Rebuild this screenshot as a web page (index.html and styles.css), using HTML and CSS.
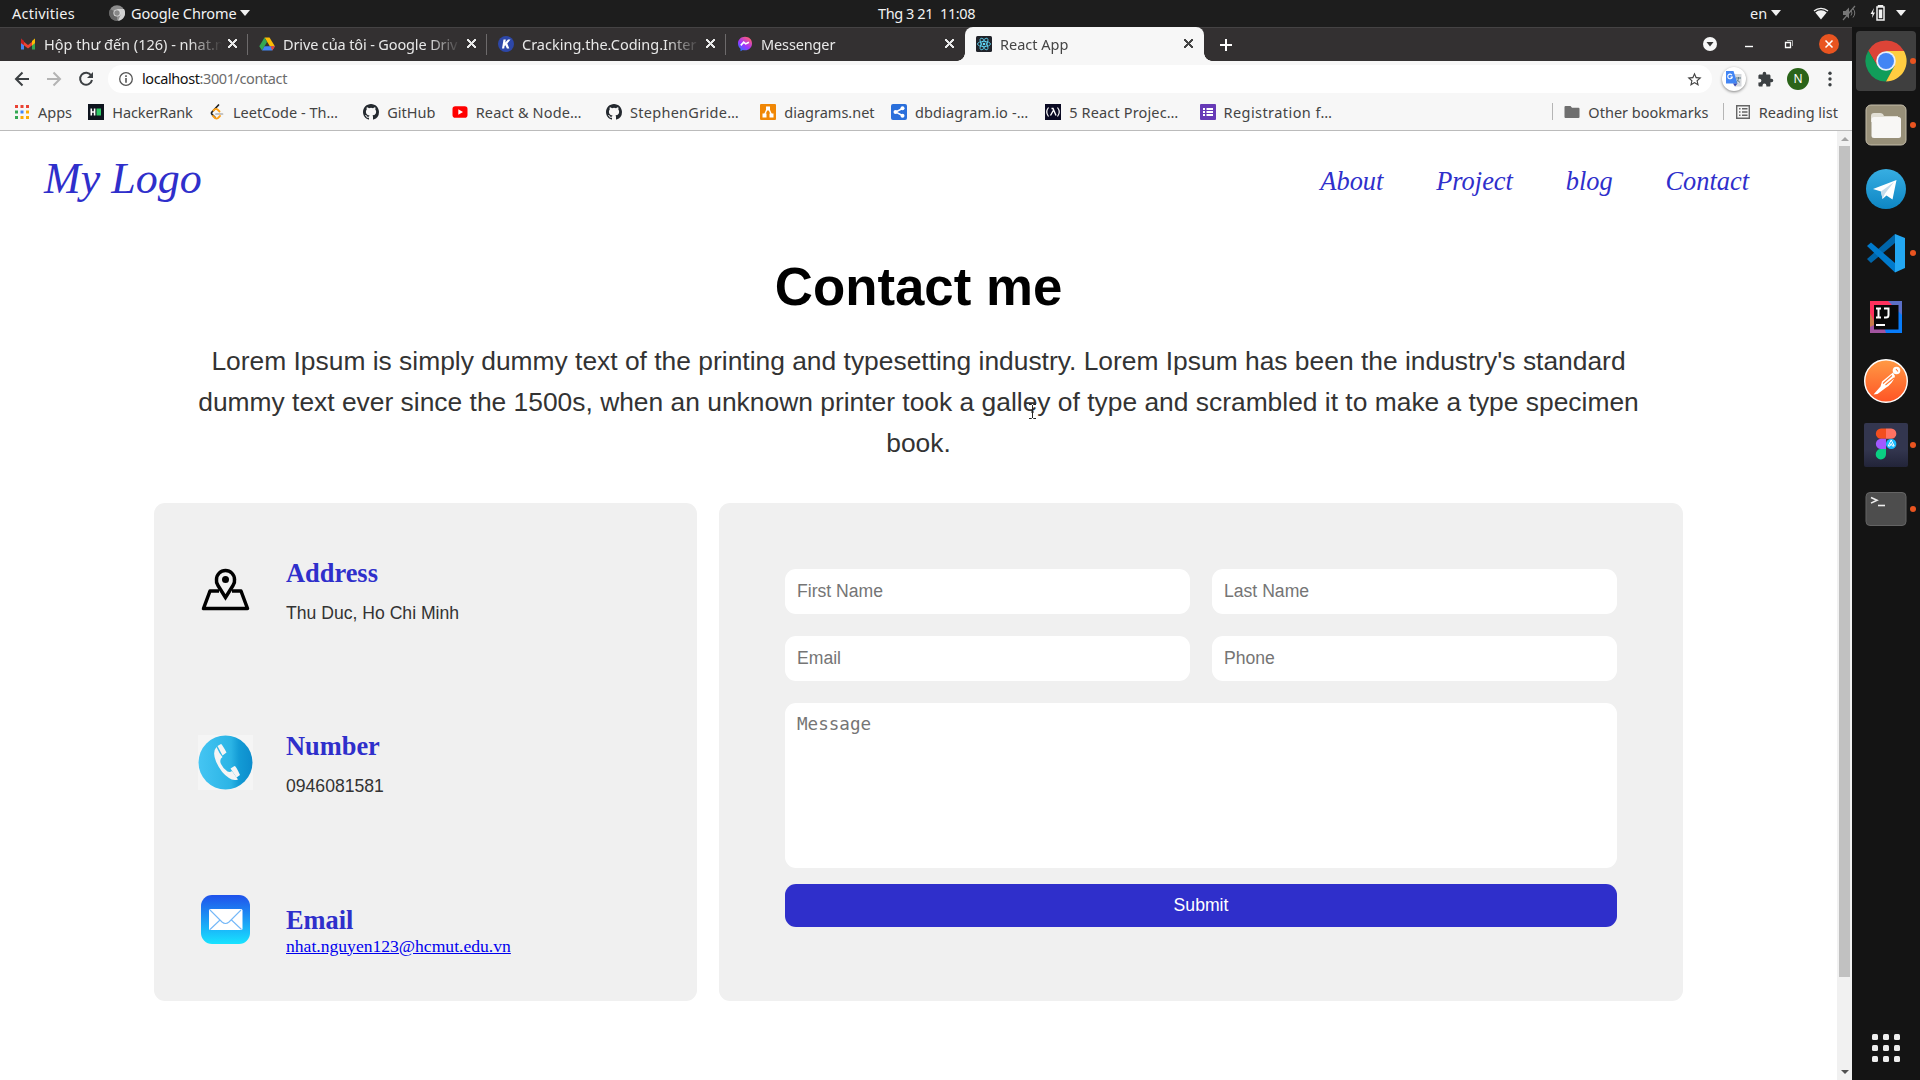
FILE: index.html
```html
<!DOCTYPE html>
<html lang="vi">
<head>
<meta charset="utf-8">
<title>React App</title>
<link rel="stylesheet" href="styles.css">
</head>
<body>
<header class="topbar">
  <span class="fit activities">Activities</span>
  <svg class="app-ico" viewBox="0 0 16 16"><circle cx="8" cy="8" r="7.8" fill="#8d8d8d"/><path d="M8 4h7A7.8 7.8 0 0 1 9 15.8L11.5 10z" fill="#d0d0d0"/><path d="M1.3 4A7.8 7.8 0 0 0 8 15.8L8 8z" fill="#666"/><circle cx="8" cy="8" r="3.6" fill="#ddd"/><circle cx="8" cy="8" r="2.7" fill="#888"/></svg>
  <span class="fit appname">Google Chrome</span>
  <i class="caret"></i>
  <span class="fit clock">Thg 3 21&ensp;11:08</span>
  <span class="fit lang">en</span>
  <i class="caret caret-lang"></i>
  <svg class="wifi" viewBox="0 0 16 14"><path d="M1 5a10.500 10.500 0 0 1 14 0" fill="none" stroke="#f2f2f2" stroke-width="1.300"/><path d="M2.300 6.500a8.500 8.500 0 0 1 11.400 0L8 13.500z" fill="#f2f2f2"/></svg>
  <svg class="mute" viewBox="0 0 16 16"><path d="M2 6h2.500L8 2.500v11L4.500 10H2z" fill="#777"/><path d="M10 5.500q2 2.500 0 5M12 3.500q3.500 4.500 0 9" fill="none" stroke="#777"/><path d="M14 1L2 15" stroke="#777" stroke-width="1.200"/></svg>
  <svg class="battery" viewBox="0 0 16 16"><path d="M8.500 2h5.500v13H7V2h1.500V.8h4V2" fill="none" stroke="#f2f2f2" stroke-width="1.500"/><path d="M8.800 4.500h3.500v8.700H8.800z" fill="#f2f2f2"/><path d="M4 3L.5 9h2L2 13 5 7.500H3z" fill="#f2f2f2"/></svg>
  <i class="caret caret-sys"></i>
</header>
<div class="desktop">
<section class="browser">
  <div class="tabs">
    <div class="tab"><svg class="fav" viewBox="0 0 16 16"><path d="M1 2.500v11h3V7z" fill="#4285f4"/><path d="M15 2.500v11h-3V7z" fill="#34a853"/><path d="M1 3.500L8 9l7-5.500V7l-7 5.500L1 7z" fill="#ea4335"/><path d="M12 5l3-2.500V7l-3 2.500z" fill="#fbbc04"/><path d="M1 2.500L4 5v4L1 7z" fill="#c5221f"/></svg><span class="tt"><span class="fit">Hộp thư đến (126) - nhat.n</span></span><b class="x"></b></div>
    <div class="tab"><svg class="fav" viewBox="0 0 16 16"><path d="M5.500 1.500h5L16 10.500h-5z" fill="#fbbc04"/><path d="M5.500 1.500L8 6 3 14.500.3 10.300z" fill="#34a853"/><path d="M5.500 10.300H16l-2.700 4.200H3z" fill="#4285f4"/><path d="M16 10.300h-4.500l1.800 4.200z" fill="#ea4335"/></svg><span class="tt"><span class="fit tight">Drive của tôi - Google Driv</span></span><b class="x"></b></div>
    <div class="tab"><svg class="fav" viewBox="0 0 16 16"><circle cx="8" cy="8" r="8" fill="#2d47a8"/><path d="M5.500 3.500h2.300l-.5 3L10 3.500h2.500L9.300 7.600l2 5H8.900L7.400 9.200l-.8.800-.4 2.600H4z" fill="#fff"/></svg><span class="tt"><span class="fit">Cracking.the.Coding.Inter</span></span><b class="x"></b></div>
    <div class="tab nosep"><svg class="fav" viewBox="0 0 16 16"><defs><linearGradient id="msg" x1="0" y1="1" x2=".7" y2="0"><stop offset="0" stop-color="#0a84ff"/><stop offset=".5" stop-color="#a033ff"/><stop offset="1" stop-color="#ff5c77"/></linearGradient></defs><path d="M8 .8C3.900.8 1 3.700 1 7.500c0 2.200 1 4 2.500 5.200v2.600l2.300-1.300c.7.200 1.400.3 2.200.3 4.100 0 7-2.900 7-6.800S12.100.8 8 .8z" fill="url(#msg)"/><path d="M3.800 9.400l2.900-3.200 2 1.700 3.200-1.700" fill="none" stroke="#fff" stroke-width="1.600"/></svg><span class="tt"><span class="fit tight">Messenger</span></span><b class="x"></b></div>
    <div class="tab active"><svg class="fav" viewBox="0 0 16 16"><rect width="16" height="16" rx="1.500" fill="#20232a"/><g fill="none" stroke="#61dafb" stroke-width=".8"><ellipse cx="8" cy="8" rx="6.500" ry="2.600"/><ellipse cx="8" cy="8" rx="6.500" ry="2.600" transform="rotate(60 8 8)"/><ellipse cx="8" cy="8" rx="6.500" ry="2.600" transform="rotate(120 8 8)"/></g><circle cx="8" cy="8" r="1.300" fill="#61dafb"/></svg><span class="tt"><span class="fit">React App</span></span><b class="x"></b></div>
    <svg class="plus" viewBox="0 0 14 14"><path d="M7 1v12M1 7h12" stroke="#fff" stroke-width="2"/></svg>
    <svg class="winctl" viewBox="0 0 140 34"><circle cx="10" cy="17" r="7" fill="#f7f7f7"/><path d="M6.500 15h7L10 19.500z" fill="#333"/><path d="M45 19.500h8" stroke="#fff" stroke-width="1.400"/><path d="M85.500 15.500h5v5h-5z" fill="none" stroke="#fff" stroke-width="1.300"/><path d="M87 13.500h5.500V19" fill="none" stroke="#aaa"/><circle cx="129" cy="17" r="10" fill="#e95420"/><path d="M125.500 13.500l7 7m0-7l-7 7" stroke="#fff" stroke-width="1.500"/></svg>
  </div>
  <div class="toolbar">
    <svg class="navs" viewBox="0 0 100 36"><g fill="none" stroke-width="2"><path d="M29 18H16m6.500-6.500L16 18l6.500 6.500" stroke="#3c4043"/><path d="M47 18h13m-6.500-6.500L60 18l-6.500 6.500" stroke="#b4b4b4"/><path d="M91.200 14.500A6 6 0 1 0 92 19" stroke="#3c4043"/></g><path d="M93 11v6h-6z" fill="#3c4043"/></svg>
    <div class="omni">
      <svg class="info" viewBox="0 0 16 16"><circle cx="8" cy="8" r="6.300" fill="none" stroke="#555" stroke-width="1.300"/><path d="M8 4.200v1.700M8 7v4.800" stroke="#555" stroke-width="1.600"/></svg>
      <span class="fit url">localhost<em>:3001/contact</em></span>
      <svg class="star" viewBox="0 0 24 24"><path d="M22 9.240l-7.190-.62L12 2 9.190 8.630 2 9.240l5.460 4.730L5.820 21 12 17.270 18.180 21l-1.630-7.030L22 9.240zM12 15.400l-3.760 2.270 1-4.280-3.320-2.880 4.380-.38L12 6.100l1.710 4.040 4.380.38-3.320 2.880 1 4.280L12 15.400z" fill="#444"/></svg>
    </div>
    <div class="translate"><svg viewBox="0 0 18 18"><path d="M8 4h8.500v12.500H10z" fill="#d5d8dc"/><path d="M1 1h7.500l4 12.500H1z" fill="#4285f4"/><path d="M8 13.500h4.500L10 16.500z" fill="#3a49b0"/><path d="M7 5.200A2.300 2.300 0 1 0 7.300 7H5.400" fill="none" stroke="#fff" stroke-width="1.100"/><path d="M11 8h5M13.500 7v1c0 2-1 3.300-2 4M12 9.500c.5 1.200 1.800 2.200 3 2.800" fill="none" stroke="#5f7c8a"/></svg></div>
    <svg class="puzzle" viewBox="0 0 24 24"><path d="M20.500 11H19V7c0-1.100-.9-2-2-2h-4V3.500a2.500 2.500 0 0 0-5 0V5H4c-1.100 0-2 .9-2 2v3.800h1.500a2.700 2.700 0 0 1 0 5.400H2V20c0 1.100.9 2 2 2h3.800v-1.500a2.700 2.700 0 0 1 5.400 0V22H17c1.100 0 2-.9 2-2v-4h1.500a2.500 2.500 0 0 0 0-5z" fill="#3c4043"/></svg>
    <span class="avatar">N</span>
    <svg class="dots" viewBox="0 0 4 16"><g fill="#3c4043"><circle cx="2" cy="2.300" r="1.700"/><circle cx="2" cy="8" r="1.700"/><circle cx="2" cy="13.700" r="1.700"/></g></svg>
  </div>
  <div class="bookmarks">
    <div class="bm apps"><svg viewBox="0 0 16 16"><path d="M1 1h3v3H1zM6.500 1h3v3h-3zM12 1h3v3h-3z" fill="#ea4335"/><path d="M1 6.500h3v3H1z" fill="#34a853"/><path d="M6.500 6.500h3v3h-3z" fill="#4285f4"/><path d="M12 6.500h3v3h-3zM6.500 12h3v3h-3zM12 12h3v3h-3z" fill="#fbab04"/><path d="M1 12h3v3H1z" fill="#34a853"/></svg><span class="fit">Apps</span></div>
    <div class="bm"><svg viewBox="0 0 16 16"><path d="M0 0h16v16H0z" fill="#0e141e"/><path d="M2.500 4.500h1.600v2.700h1.700V4.500h1.600v7H5.800V8.800H4.100v2.700H2.500z" fill="#fff"/><path d="M8.500 4.500H13v7H8.500z" fill="#2ec866"/></svg><span class="fit tight">HackerRank</span></div>
    <div class="bm wide"><svg viewBox="0 0 16 16"><path d="M9.500 1L3 8q-1 1.200 0 2.300l3 3" fill="none" stroke="#222" stroke-width="1.700" stroke-linecap="round"/><path d="M4.500 6.500l1-1q1.500-1.200 3 0l2 2M4 12l2 2q1.500 1.200 3 0l2-2" fill="none" stroke="#ffa116" stroke-width="1.800" stroke-linecap="round"/><path d="M7 10h6.500" stroke="#b3b3b3" stroke-width="1.700" stroke-linecap="round"/></svg><span><span class="fit">LeetCode - Th…</span></span></div>
    <div class="bm"><svg viewBox="0 0 16 16"><path id="gh" d="M8 0C3.580 0 0 3.580 0 8c0 3.540 2.290 6.530 5.470 7.590.4.070.55-.17.55-.38 0-.19-.01-.82-.01-1.490-2.010.37-2.530-.49-2.690-.94-.09-.23-.48-.94-.82-1.130-.28-.15-.68-.52-.01-.53.63-.01 1.080.58 1.230.82.72 1.210 1.870.87 2.330.66.070-.52.28-.87.51-1.070-1.780-.2-3.640-.89-3.640-3.950 0-.87.31-1.590.82-2.150-.08-.2-.36-1.020.080-2.120 0 0 .67-.21 2.200.82a7.600 7.600 0 0 1 4 0c1.530-1.040 2.200-.82 2.200-.82.44 1.100.16 1.920.08 2.120.51.56.82 1.270.82 2.150 0 3.070-1.870 3.750-3.650 3.950.29.25.54.73.54 1.480 0 1.070-.01 1.930-.01 2.200 0 .21.15.46.55.38A8 8 0 0 0 16 8c0-4.420-3.580-8-8-8z" fill="#24292f"/></svg><span class="fit">GitHub</span></div>
    <div class="bm wide"><svg viewBox="0 0 16 16"><rect x=".5" y="2.300" width="15" height="11.400" rx="2.800" fill="#f00"/><path d="M6.300 5.300v5.400L11 8z" fill="#fff"/></svg><span><span class="fit loose1">React &amp; Node…</span></span></div>
    <div class="bm wide"><svg viewBox="0 0 16 16"><use href="#gh"/></svg><span><span class="fit loose2">StephenGride…</span></span></div>
    <div class="bm"><svg viewBox="0 0 16 16"><rect width="16" height="16" rx="1" fill="#f08705"/><path d="M8 3L4 12M8 3l4 9" stroke="#fff" stroke-width="1.400"/><path d="M6 2.500h4v4H6zM2.500 9.500h4v4h-4zM9.500 9.500h4v4h-4z" fill="#fff"/></svg><span class="fit">diagrams.net</span></div>
    <div class="bm wide"><svg viewBox="0 0 16 16"><rect width="16" height="16" rx="2" fill="#2a6fdb"/><path d="M11.500 4.500L4.500 8l7 3.500" fill="none" stroke="#fff" stroke-width="1.400"/><circle cx="4.500" cy="8" r="2" fill="#fff"/><circle cx="11.500" cy="4.300" r="2" fill="#fff"/><circle cx="11.500" cy="11.700" r="2" fill="#fff"/></svg><span><span class="fit loose1">dbdiagram.io -…</span></span></div>
    <div class="bm wide"><svg viewBox="0 0 16 16"><path d="M0 0h16v16H0z" fill="#0a0a23"/><path d="M3.500 3.500Q0 8 3.500 12.500M12.500 3.500Q16 8 12.500 12.500" fill="none" stroke="#fff" stroke-width="1.200"/><path d="M6.500 4.500h1.500L11 11.500M8.300 6.500L5.500 11.500" fill="none" stroke="#fff" stroke-width="1.400"/></svg><span><span class="fit loose1">5 React Projec…</span></span></div>
    <div class="bm wide"><svg viewBox="0 0 16 16"><rect width="16" height="16" rx="1" fill="#673ab7"/><path d="M3 4h2v2H3zM3 7h2v2H3zM3 10h2v2H3zM6.500 4H13v2H6.500zM6.500 7H13v2H6.500zM6.500 10H13v2H6.500z" fill="#fff"/></svg><span><span class="fit loose3">Registration f…</span></span></div>
    <div class="bm other"><svg viewBox="0 0 16 16"><path d="M1.500 2h5L8 3.700h6.500q1 0 1 1V13q0 1-1 1h-13q-1 0-1-1V3q0-1 1-1z" fill="#6f6f6f"/></svg><span class="fit">Other bookmarks</span></div>
    <div class="bm reading"><svg viewBox="0 0 16 16"><path d="M1.700 1.700h12.600v12.600H1.700z" fill="none" stroke="#666" stroke-width="1.400"/><path d="M4 4.700h1.500M7 4.700h5.500M4 8h1.500M7 8h5.500M4 11.300h1.500M7 11.300h5.500" stroke="#666" stroke-width="1.500"/></svg><span class="fit">Reading list</span></div>
  </div>
  <div class="viewport">
    <main class="page">
      <nav class="site-nav">
        <span class="fit logo">My Logo</span>
        <div class="links"><a>About</a><a>Project</a><a>blog</a><a>Contact</a></div>
      </nav>
      <h1>Contact me</h1>
      <p class="lead">Lorem Ipsum is simply dummy text of the printing and typesetting industry. Lorem Ipsum has been the industry's standard dummy text ever since the 1500s, when an unknown printer took a galley of type and scrambled it to make a type specimen book.</p>
      <div class="cards">
        <section class="card info-card">
          <div class="row"><svg viewBox="0 0 55 55"><g fill="none" stroke="#000" stroke-width="3.500" stroke-linejoin="round"><path d="M21 29h-9L5.500 46.500h44L43 29h-9"/><path d="M27.500 35.500L20 23.500q-2-3-1.500-6a9 9 0 0 1 18 0q.5 3-1.500 6z" stroke-linejoin="miter"/></g><circle cx="27.500" cy="17.500" r="3.500"/></svg><div><h2>Address</h2><p>Thu Duc, Ho Chi Minh</p></div></div>
          <div class="row"><svg viewBox="0 0 55 55"><defs><linearGradient id="ph"><stop offset="0" stop-color="#45c5f3"/><stop offset=".6" stop-color="#2bb4e5"/><stop offset=".75" stop-color="#139bd5"/><stop offset="1" stop-color="#0c8ccc"/></linearGradient></defs><path d="M0 0h55v55H0z" fill="#f5f5f5"/><circle cx="27.500" cy="27.500" r="27" fill="url(#ph)"/><path d="M18.500 12q2.500 6 6 10-3.500 2.500-1.500 7t6.500 7.500q2.500 1 4.500-.5l6 8.500q-5 1.500-9-1.500-8-5-13-16.500-4-9.500.5-14.500z" fill="#f5f5f5"/><path d="M19.500 11l3.500-2q1 0 5.500 8.500L24.500 20.500zM32.500 33.500l4-2.500q1.500 0 5.500 9l-3.500 2.500z" fill="#f5f5f5"/></svg><div><h2>Number</h2><p>0946081581</p></div></div>
          <div class="row mail"><svg viewBox="0 0 55 55"><defs><linearGradient id="ml" x1="0" y1="0" x2="0" y2="1"><stop offset="0" stop-color="#1f51eb"/><stop offset="1" stop-color="#18e3ff"/></linearGradient></defs><rect x="3" y="3" width="49" height="49" rx="11" fill="url(#ml)"/><rect x="11" y="17" width="33.500" height="21" rx="1.500" fill="#fff"/><path d="M12 18l12 12q3.500 3 7 0l12-12M12 37.500l10-9.500M43.500 37.500l-10-9.500" fill="none" stroke="#74b8f8" stroke-width="1.100"/></svg><div><h2>Email</h2><a>nhat.nguyen123@hcmut.edu.vn</a></div></div>
        </section>
        <form class="card form-card">
          <input placeholder="First Name"><input placeholder="Last Name">
          <input placeholder="Email"><input placeholder="Phone">
          <textarea placeholder="Message"></textarea>
          <button type="button">Submit</button>
        </form>
      </div>
      <svg class="cursor" viewBox="0 0 9 17"><path d="M1 1.500h2.500l1 1 1-1H8M1 15.500h2.500l1-1 1 1H8M4.500 2v13M3 9h3" fill="none" stroke="#222"/></svg>
    </main>
    <div class="scroll"><i class="up"></i><i class="thumb"></i><i class="down"></i></div>
  </div>
</section>
<aside class="dock">
  <div class="app sel run"><svg viewBox="0 0 44 44"><path d="M22 12h18A20.500 20.500 0 0 0 4.300 11.700L13.500 27z" fill="#dd4437"/><path d="M4.300 11.700A20.500 20.500 0 0 0 22 42.500L30.500 27 13.500 27z" fill="#119d5a"/><path d="M22 12h18A20.500 20.500 0 0 1 22 42.500L30.500 27z" fill="#ffcd41"/><circle cx="22" cy="22" r="9.800" fill="#e8eefb"/><circle cx="22" cy="22" r="8" fill="#4285f4"/></svg></div>
  <div class="app run"><svg viewBox="0 0 44 44"><rect x="2" y="2" width="40" height="40" rx="5" fill="#989079" stroke="#c3bca9"/><path d="M7 13q0-3 3-3h6q3 0 4 3h14v6H7z" fill="#e2dfd5"/><rect x="7.500" y="14" width="29.500" height="21" rx="2.500" fill="#f8f7f5"/></svg></div>
  <div class="app"><svg viewBox="0 0 44 44"><defs><linearGradient id="tg" x1="0" y1="0" x2="0" y2="1"><stop offset="0" stop-color="#37aee2"/><stop offset="1" stop-color="#0e86c4"/></linearGradient></defs><circle cx="22" cy="22" r="20" fill="url(#tg)"/><path d="M9 22l23.500-9-4 19.500-6-4-4 3.500-1.500-7.500z" fill="#fff"/><path d="M17 24.500L30 15l-9 11.500-2.500 5.500z" fill="#c5dceb"/></svg></div>
  <div class="app run"><svg viewBox="0 0 44 44"><path d="M3 28l4 4L31 12V3z" fill="#0065a9"/><path d="M3 15l4-3.500L31 32v9.500z" fill="#007acc"/><path d="M31 3l10 4v30l-10 4.500z" fill="#23a7f2"/></svg></div>
  <div class="app"><svg viewBox="0 0 44 44"><path d="M6 6h32v32H6z" fill="#087cfa"/><path d="M6 6h26L6 38z" fill="#fe315d"/><path d="M6 18l10 20H6z" fill="#c77a4a"/><path d="M24 6h14v14z" fill="#5b6fc7"/><path d="M6 32l12-6 4 12H6z" fill="#a254a0"/><path d="M10 10h24.500v24.500H10z" fill="#080808"/><path d="M12 13.500h5M14.500 13.500v9M12 22.500h5M20 13.500h4.500v6.500q0 2.500-2.500 2.500h-2" fill="none" stroke="#fff" stroke-width="2"/><path d="M12 30h9" stroke="#fff" stroke-width="2"/></svg></div>
  <div class="app"><svg viewBox="0 0 44 44"><defs><linearGradient id="pm" x1="0" y1="0" x2="0" y2="1"><stop offset="0" stop-color="#ff9a45"/><stop offset="1" stop-color="#ff5425"/></linearGradient></defs><circle cx="22" cy="22" r="21.300" fill="url(#pm)" stroke="#fff" stroke-width="1.400"/><circle cx="32.500" cy="11.500" r="3.800" fill="#fff"/><path d="M29 13.500l-11 9-1.500 5-7 8 4-.5 8-6q7-4 9.500-12z" fill="#fff"/><path d="M28 16.500l-9 8M30 19l-8.500 7M32 10l2 2.500" stroke="#ff7a35" stroke-width="1.100"/></svg></div>
  <div class="app run"><svg viewBox="0 0 44 44"><defs><linearGradient id="fg" x1="0" y1="0" x2="0" y2="1"><stop offset=".6" stop-color="#33364f"/><stop offset="1" stop-color="#222439"/></linearGradient></defs><rect width="44" height="44" rx="2" fill="url(#fg)"/><path d="M17 5.500h5v10.300h-5a5.150 5.150 0 0 1 0-10.300z" fill="#f24e1e"/><path d="M22 5.500h5.200a5.150 5.150 0 0 1 0 10.300H22z" fill="#ff7262"/><path d="M17 15.800h5v10.300h-5a5.150 5.150 0 0 1 0-10.300z" fill="#a259ff"/><path d="M17 26.100h5v5.200a5.150 5.150 0 1 1-5-5.200z" fill="#0acf83"/><circle cx="27.200" cy="20.900" r="5.200" fill="#1abcfe"/><path d="M27.200 17l-3 6h1.800l1.200-2.500 1.200 2.500h1.800z" fill="none" stroke="#fff"/></svg></div>
  <div class="app run"><svg viewBox="0 0 44 44"><rect x="2" y="5.500" width="40" height="33" rx="4" fill="#4d4d4d" stroke="#646464"/><path d="M7 10.500l6 2.800-6 2.800" fill="none" stroke="#eee" stroke-width="1.600"/><path d="M14 18.500h7" stroke="#eee" stroke-width="1.600"/></svg></div>
  <svg class="grid" viewBox="0 0 28 28"><g fill="#eee"><rect width="6" height="6" rx="1.500"/><rect x="11" width="6" height="6" rx="1.500"/><rect x="22" width="6" height="6" rx="1.500"/><rect y="11" width="6" height="6" rx="1.500"/><rect x="11" y="11" width="6" height="6" rx="1.500"/><rect x="22" y="11" width="6" height="6" rx="1.500"/><rect y="22" width="6" height="6" rx="1.500"/><rect x="11" y="22" width="6" height="6" rx="1.500"/><rect x="22" y="22" width="6" height="6" rx="1.500"/></g></svg>
</aside>
</div>
</body>
</html>
```
FILE: styles.css
```css
*{box-sizing:border-box}
body{margin:0;width:1920px;height:1080px;overflow:hidden;background:#141414;font:14.5px "Noto Sans",sans-serif}
svg{display:block;flex:none}
.fit{white-space:pre;display:inline-block}
.tight{letter-spacing:-.13px}
.loose1{letter-spacing:.15px}
.loose2{letter-spacing:.28px}
.loose3{letter-spacing:.43px}
.topbar{height:27px;background:#1d1d1d;color:#f2f2f2;display:flex;align-items:center;padding:0 0 2px 12px}
.activities{width:63px;letter-spacing:.25px}
.app-ico{width:16px;height:16px;margin-left:34px}
.appname{width:104px;margin-left:6px;letter-spacing:-.12px}
.caret{border:5px solid transparent;border-top:6px solid #f2f2f2;border-bottom:0;margin-left:5px}
.clock{width:97px;margin-left:628px;letter-spacing:-.4px}
.lang{width:16px;margin-left:775px}
.wifi{width:16px;height:14px;margin-left:32px}
.mute{width:16px;height:16px;margin-left:12px}
.battery{width:16px;height:16px;margin-left:13px}
.caret-sys{margin-left:10px}
.desktop{display:flex;height:1053px}
.browser{width:1852px;display:flex;flex-direction:column}
.tabs{height:34px;background:#333031;border-top:1px solid #454344;display:flex;align-items:center;padding-left:9px}
.tab{width:239px;height:33px;display:flex;align-items:center;padding:0 0 2px 11px;color:#e8e8e8;position:relative}
.tab::after{content:"";position:absolute;right:0;top:6px;height:21px;width:1px;background:#6d6a6b}
.tab.nosep::after,.tab.active::after{display:none}
.fav{width:16px;height:16px}
.tt{width:178px;margin-left:8px;overflow:hidden;mask-image:linear-gradient(90deg,#000 145px,transparent 178px)}
.x{width:9px;height:9px;margin-left:6px;background:linear-gradient(45deg,transparent 44%,currentColor 44% 56%,transparent 56%),linear-gradient(-45deg,transparent 44%,currentColor 44% 56%,transparent 56%)}
.tab.active{background:#f7f7f7;color:#454545;border-radius:8px 8px 0 0;height:34px;margin-top:-1px;padding-bottom:1px}
.tab.active::before{content:"";position:absolute;left:-8px;right:-8px;bottom:0;height:8px;background:radial-gradient(circle at 0 0,transparent 7.5px,#f7f7f7 8px) left/8px 8px no-repeat,radial-gradient(circle at 100% 0,transparent 7.5px,#f7f7f7 8px) right/8px 8px no-repeat}
.plus{width:14px;height:14px;margin-left:15px}
.winctl{width:140px;height:34px;margin:-2px 0 0 467px}
.toolbar{height:36px;background:#f7f7f7;display:flex;align-items:center}
.navs{width:100px;height:36px}
.omni{width:1604px;height:28px;margin-left:8px;border-radius:14px;background:#fff;display:flex;align-items:center;padding:0 9px 0 10px}
.info{width:16px;height:16px}
.url{margin:-2px 0 0 8px;color:#111;letter-spacing:-.41px}
.url em{font-style:normal;color:#6c6c6c}
.star{width:17px;height:17px;margin-left:auto}
.translate{width:24px;height:24px;margin-left:10px;border-radius:50%;background:#fff;box-shadow:0 1px 3px #0007;display:grid;place-items:center}
.translate svg{width:18px;height:18px}
.puzzle{width:17px;height:17px;margin-left:11px}
.avatar{width:22px;height:22px;margin-left:13px;border-radius:50%;background:#2b6419;color:#fff;font-size:12px;line-height:22px;text-align:center}
.dots{width:4px;height:16px;margin-left:19px}
.bookmarks{height:34px;background:#f7f7f7;border-bottom:1px solid #bbb;display:flex;align-items:center;padding:0 14px 4px 14px;gap:16.3px;color:#444}
.bm{display:flex;align-items:center;gap:8px;white-space:nowrap}
.bm svg{width:16px;height:16px}
.bm.wide>span{width:114px}
.other,.reading{border-left:1px solid #b5b5b5;height:17px;padding-left:11px}
.other{margin-left:auto}
.reading{margin-left:-2px}
.viewport{flex:1;display:flex;background:#fff;min-height:0}
.page{width:1837px;position:relative;font-family:"Liberation Sans",Arial,sans-serif}
.scroll{width:15px;background:#f1f1f1;display:flex;flex-direction:column;align-items:center}
.scroll i{flex:none}
.up{border:4px solid transparent;border-bottom:4px solid #a3a3a3;border-top:0;margin-top:6px}
.thumb{width:11px;height:831px;background:#c1c1c1;margin-top:5px}
.down{border:4px solid transparent;border-top:4px solid #505050;border-bottom:0;margin-top:93px}
.site-nav{display:flex;justify-content:space-between;align-items:center;height:97px;padding:0 88px 0 44px;font-family:"Liberation Serif","Times New Roman",serif;font-style:italic;color:#2f2fcb}
.logo{font-size:44px;margin-top:-3px}
.links{display:flex;gap:52.8px;font-size:26.4px;padding-top:4px}
h1{margin:28px 0 0;font-size:52.8px;line-height:61px;text-align:center;color:#000}
.lead{width:1450px;margin:24px auto 0;font-size:26.4px;line-height:41px;text-align:center;color:#333}
.cards{display:flex;gap:22px;margin:39px 0 0 154px}
.card{height:498px;background:#f0f0f0;border-radius:11px}
.info-card{width:543px;padding:55px 44px 0}
.row{display:flex;gap:33px;height:173.3px}
.row svg{width:55px;height:55px;margin-top:4px}
.mail svg{margin-top:-13px}
.row h2{margin:0;font:bold 26.4px/30px "Liberation Serif","Times New Roman",serif;color:#2f2fcb}
.row p{margin:15px 0 0;font-size:17.6px;line-height:20px;color:#333}
.row a{display:block;font:17.6px/22px "Liberation Serif","Times New Roman",serif;color:#00e;text-decoration:underline}
.form-card{width:964px;padding:66px;display:grid;grid-template-columns:405px 405px;grid-template-rows:45px 45px 165px 43px;column-gap:22px;row-gap:22px}
input,textarea,button{border:0;border-radius:11px;padding:11px 12px;font:17.6px "Liberation Sans",Arial,sans-serif;background:#fff;margin:0;resize:none}
input::placeholder,textarea::placeholder{color:#757575}
textarea{grid-column:1/3;font-family:"DejaVu Sans Mono",monospace}
button{grid-column:1/3;background:#2f2fcb;color:#fff;margin-top:-6px;height:43px}
.cursor{position:absolute;left:1028px;top:272px;width:9px;height:17px}
.dock{width:68px;background:#141414;display:flex;flex-direction:column;align-items:center;padding-top:4px;gap:4px}
.app{width:60px;height:60px;display:grid;place-items:center;position:relative}
.app svg{width:44px;height:44px}
.sel{background:#3f3f3f;border-radius:4px}
.run::after{content:"";position:absolute;right:0;top:27px;width:6px;height:6px;border-radius:50%;background:#e95420}
.grid{width:28px;height:28px;margin-top:auto;margin-bottom:18px}
```
